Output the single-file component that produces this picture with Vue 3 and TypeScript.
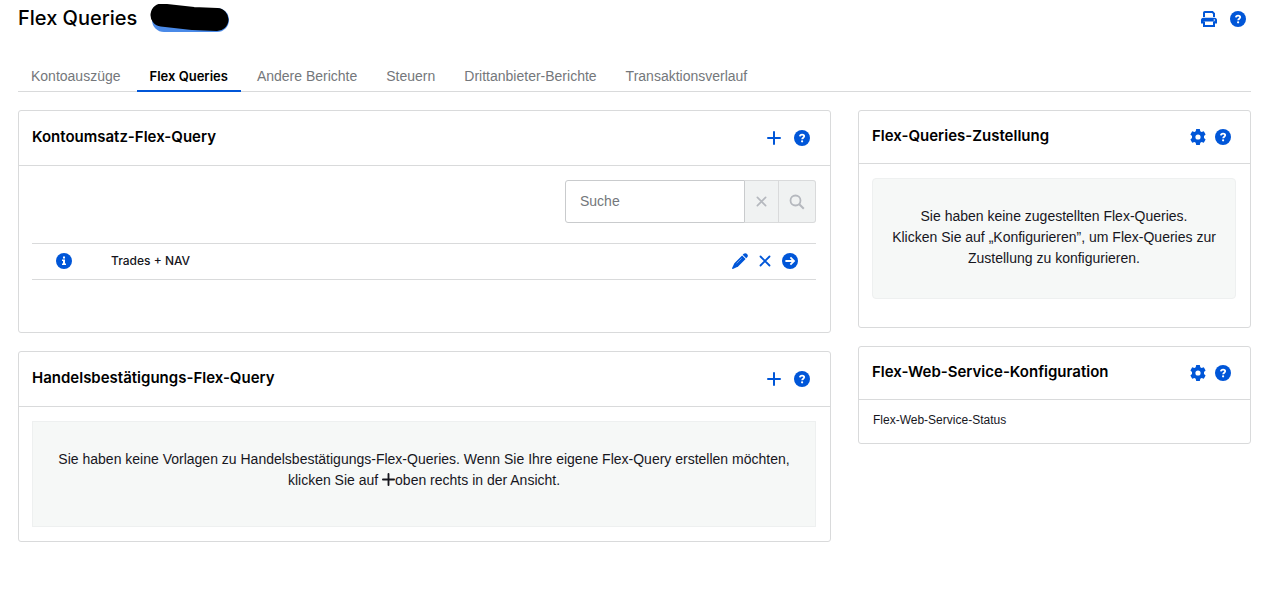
<script setup lang="ts">
import { ref } from 'vue'

interface Tab {
  label: string
  href: string
}

const tabs: Tab[] = [
  { label: 'Kontoauszüge', href: '#kontoauszuege' },
  { label: 'Flex Queries', href: '#flex-queries' },
  { label: 'Andere Berichte', href: '#andere-berichte' },
  { label: 'Steuern', href: '#steuern' },
  { label: 'Drittanbieter-Berichte', href: '#drittanbieter' },
  { label: 'Transaktionsverlauf', href: '#transaktionen' },
]
const activeTab = ref('Flex Queries')
const search = ref('')
const queries = ref<string[]>(['Trades + NAV'])
</script>

<template>
  <svg class="symbols" aria-hidden="true">
    <symbol id="i-help" viewBox="0 0 16 16">
      <circle cx="8" cy="8" r="8" fill="currentColor" />
      <path d="M5.900 6.400C6 5.200 6.900 4.600 8.100 4.600c1.200 0 2.100.6 2.100 1.700 0 1.400-2 1.400-2 2.900" fill="none" stroke="#fff" stroke-width="1.800" />
      <circle cx="8.100" cy="11.300" r="1.100" fill="#fff" />
    </symbol>
    <symbol id="i-info" viewBox="0 0 16 16">
      <circle cx="8" cy="8" r="8" fill="currentColor" />
      <path d="M7 3.400h2v2H7zM6 6.600h3v3.900h1V12H6v-1.500h1V8.100H6z" fill="#fff" />
    </symbol>
    <symbol id="i-arrow" viewBox="0 0 16 16">
      <circle cx="8" cy="8" r="8" fill="currentColor" />
      <path d="M3.400 8h8.400M8.400 4.400 12 8l-3.600 3.600" fill="none" stroke="#fff" stroke-width="1.800" />
    </symbol>
    <symbol id="i-plus" viewBox="0 0 14 14">
      <path d="M7 1v12M1 7h12" fill="none" stroke="currentColor" stroke-width="2" stroke-linecap="round" />
    </symbol>
    <symbol id="i-cross" viewBox="0 0 12 12">
      <path d="m1.500 1.500 9 9M10.500 1.500l-9 9" fill="none" stroke="currentColor" stroke-width="1.800" stroke-linecap="round" />
    </symbol>
    <symbol id="i-search" viewBox="0 0 16 16">
      <circle cx="6.500" cy="6.500" r="5" fill="none" stroke="currentColor" stroke-width="1.800" />
      <path d="m10.300 10.300 4.500 4.500" fill="none" stroke="currentColor" stroke-width="2" />
    </symbol>
    <symbol id="i-pencil" viewBox="0 0 16 16">
      <path fill="currentColor" d="m10.700 1.800 1-1c.9-.9 2.300-.9 3.100 0l.4.400c.9.900.9 2.300 0 3.100l-1 1zM10.100 2.400l3.500 3.500-7.500 7.500c-.3.300-.6.500-1 .6L.9 15.900c-.5.200-1-.3-.8-.8L2 10.900c.1-.4.300-.7.600-1z" />
      <path d="m4.600 10.400 5-5" stroke="#fff" stroke-width=".4" fill="none" />
    </symbol>
    <symbol id="i-print" viewBox="0 0 16 16">
      <path d="M3 6V1.800C3 1.300 3.300 1 3.800 1h7.600L13 2.600V6" fill="none" stroke="currentColor" stroke-width="2" />
      <path d="M2.200 6.800h11.600c1.200 0 2.200 1 2.200 2.200v3.500h-2.500v-2h-11v2H0V9c0-1.200 1-2.200 2.200-2.200z" fill="currentColor" />
      <path d="M3 10.500V15h10v-4.500" fill="none" stroke="currentColor" stroke-width="2" />
      <circle cx="13.300" cy="9" r=".8" fill="#fff" />
    </symbol>
    <symbol id="i-gear" viewBox="0 0 16 16">
      <path fill="currentColor" fill-rule="evenodd" d="M6.200 0h3.600l.5 2.200 1.300.8 2.200-.7 1.800 3.100L14 7v2l1.600 1.600-1.800 3.100-2.200-.7-1.300.8-.5 2.200H6.200l-.5-2.200-1.300-.8-2.200.7-1.800-3.100L2 9V7L.4 5.400l1.800-3.100 2.200.7 1.300-.8zM8 5.400a2.600 2.600 0 1 0 0 5.200 2.600 2.600 0 0 0 0-5.200z" />
    </symbol>
  </svg>

  <div class="page">
    <header class="top">
      <h1>Flex Queries</h1>
      <svg class="account" viewBox="0 0 80 30" aria-hidden="true">
        <rect x="2" y="4" width="77" height="24" rx="12" fill="#4a8ae8" />
        <path d="M12 11 43 14.500 67 15.500" fill="none" stroke="#000" stroke-width="23" stroke-linecap="round" stroke-linejoin="round" />
      </svg>
      <div class="top-actions">
        <button type="button" aria-label="Drucken"><svg class="ico"><use href="#i-print" /></svg></button>
        <button type="button" aria-label="Hilfe"><svg class="ico"><use href="#i-help" /></svg></button>
      </div>
    </header>

    <nav class="tabs">
      <a v-for="tab in tabs" :key="tab.label" :href="tab.href" :class="{ active: tab.label === activeTab }" @click.prevent="activeTab = tab.label">{{ tab.label }}</a>
    </nav>

    <main class="columns">
      <div class="column">
        <section class="card">
          <header class="card-head wide">
            <h2>Kontoumsatz-Flex-Query</h2>
            <div class="actions wide">
              <button type="button" aria-label="Hinzufügen"><svg class="ico-plus"><use href="#i-plus" /></svg></button>
              <button type="button" aria-label="Hilfe"><svg class="ico"><use href="#i-help" /></svg></button>
            </div>
          </header>
          <div class="card-body queries">
            <form class="search" @submit.prevent>
              <input v-model="search" type="text" placeholder="Suche" aria-label="Suche">
              <button type="button" class="clear" aria-label="Löschen" @click="search = ''"><svg class="ico-small"><use href="#i-cross" /></svg></button>
              <button type="submit" class="find" aria-label="Suchen"><svg class="ico"><use href="#i-search" /></svg></button>
            </form>
            <table>
              <tbody>
                <tr v-for="query in queries" :key="query">
                  <td class="info"><button type="button" aria-label="Info"><svg class="ico"><use href="#i-info" /></svg></button></td>
                  <td>{{ query }}</td>
                  <td class="row-actions">
                    <div>
                      <button type="button" aria-label="Bearbeiten"><svg class="ico"><use href="#i-pencil" /></svg></button>
                      <button type="button" aria-label="Entfernen"><svg class="ico-cross"><use href="#i-cross" /></svg></button>
                      <button type="button" aria-label="Ausführen"><svg class="ico"><use href="#i-arrow" /></svg></button>
                    </div>
                  </td>
                </tr>
              </tbody>
            </table>
          </div>
        </section>

        <section class="card">
          <header class="card-head wide">
            <h2>Handelsbestätigungs-Flex-Query</h2>
            <div class="actions wide">
              <button type="button" aria-label="Hinzufügen"><svg class="ico-plus"><use href="#i-plus" /></svg></button>
              <button type="button" aria-label="Hilfe"><svg class="ico"><use href="#i-help" /></svg></button>
            </div>
          </header>
          <div class="card-body">
            <p class="note square"><span>Sie haben keine Vorlagen zu Handelsbestätigungs-Flex-Queries. Wenn Sie Ihre eigene Flex-Query erstellen möchten,</span> <span>klicken Sie auf</span> <svg class="inline-plus" aria-hidden="true"><use href="#i-plus" /></svg><span>oben rechts in der Ansicht.</span></p>
          </div>
        </section>
      </div>

      <div class="column">
        <section class="card">
          <header class="card-head">
            <h2>Flex-Queries-Zustellung</h2>
            <div class="actions">
              <button type="button" aria-label="Konfigurieren"><svg class="ico"><use href="#i-gear" /></svg></button>
              <button type="button" aria-label="Hilfe"><svg class="ico"><use href="#i-help" /></svg></button>
            </div>
          </header>
          <div class="card-body delivery">
            <p class="note">Sie haben keine zugestellten Flex-Queries.<br>Klicken Sie auf „Konfigurieren”, um Flex-Queries zur Zustellung zu konfigurieren.</p>
          </div>
        </section>

        <section class="card">
          <header class="card-head">
            <h2>Flex-Web-Service-Konfiguration</h2>
            <div class="actions">
              <button type="button" aria-label="Konfigurieren"><svg class="ico"><use href="#i-gear" /></svg></button>
              <button type="button" aria-label="Hilfe"><svg class="ico"><use href="#i-help" /></svg></button>
            </div>
          </header>
          <p class="status">Flex-Web-Service-Status</p>
        </section>
      </div>
    </main>
  </div>
</template>

<style>
body {
  margin: 0;
  background: #fff;
}
</style>

<style scoped>
.symbols {
  position: absolute;
  width: 0;
  height: 0;
}
.page {
  padding: 0 21px 24px 18px;
  font-family: "Liberation Sans", Arial, sans-serif;
  font-size: 14px;
  line-height: 21px;
  color: #16161d;
}
h1,
h2,
p {
  margin: 0;
}
h1,
h2 {
  font-family: Inter, sans-serif;
  font-weight: 600;
  color: #000;
}
h1 {
  margin-bottom: 2px;
  font-size: 20px;
  line-height: 36px;
  font-weight: 500;
}
h2 {
  font-size: 15px;
  line-height: 24px;
}
svg {
  display: block;
}
button {
  display: flex;
  align-items: center;
  justify-content: center;
  padding: 0;
  border: 0;
  background: none;
  color: #0056d8;
  cursor: pointer;
}
.ico {
  width: 16px;
  height: 16px;
}
.ico-plus {
  width: 14px;
  height: 14px;
}
.ico-cross {
  width: 12px;
  height: 12px;
}
.ico-small {
  width: 11px;
  height: 11px;
}
.top {
  display: flex;
  align-items: center;
  height: 38px;
  gap: 13px;
}
.account {
  width: 80px;
  height: 30px;
}
.top-actions {
  display: flex;
  gap: 13px;
  margin-left: auto;
  padding-right: 5px;
}
.tabs {
  display: flex;
  gap: 3px;
  margin-top: 23px;
  border-bottom: 1px solid #d9dadb;
}
.tabs a {
  margin-bottom: -1px;
  padding: 5px 13px 3px;
  border-bottom: 2px solid transparent;
  color: #74777b;
  text-decoration: none;
  white-space: nowrap;
}
.tabs a.active {
  border-bottom-color: #0056d8;
  color: #000;
  font-family: Inter, sans-serif;
  font-size: 13px;
  font-weight: 600;
}
.columns {
  display: grid;
  grid-template-columns: 813fr 393fr;
  gap: 27px;
  align-items: start;
  margin-top: 18px;
}
.column {
  display: grid;
  gap: 18px;
}
.card {
  border: 1px solid #d9dadb;
  border-radius: 3px;
}
.card-head {
  display: flex;
  align-items: center;
  justify-content: space-between;
  padding: 13px 19px 15px 13px;
  border-bottom: 1px solid #d9dadb;
}
.card-head.wide {
  padding: 14px 20px 16px 13px;
}
.actions {
  display: flex;
  align-items: center;
  gap: 9px;
  padding-top: 2px;
}
.actions.wide {
  gap: 13px;
}
.card-body {
  padding: 14px;
  padding-left: 13px;
}
.queries {
  padding-bottom: 52px;
}
.delivery {
  padding-bottom: 28px;
}
.search {
  display: flex;
  width: 251px;
  height: 43px;
  margin-left: auto;
  margin-bottom: 20px;
}
.search input {
  box-sizing: border-box;
  flex: 1;
  min-width: 0;
  padding: 0 14px;
  border: 1px solid #c9cbcd;
  border-radius: 3px 0 0 3px;
  font: inherit;
  color: #16161d;
}
.search input::placeholder {
  color: #74777b;
  opacity: 1;
}
.search button {
  box-sizing: border-box;
  border: 1px solid #d9dadb;
  border-left: 0;
  background: #f0f2f2;
  color: #b5b8be;
}
.clear {
  width: 34px;
}
.find {
  width: 37px;
  border-radius: 0 3px 3px 0;
}
table {
  width: 100%;
  border-collapse: collapse;
  font-family: Inter, sans-serif;
  font-size: 12px;
  line-height: 18px;
  font-weight: 500;
}
tr {
  border-top: 1px solid #d9dadb;
  border-bottom: 1px solid #d9dadb;
}
td {
  height: 33px;
  padding: 0 0 2px;
}
td.info {
  width: 55px;
  padding-left: 24px;
}
.row-actions div {
  display: flex;
  align-items: center;
  justify-content: flex-end;
  gap: 11px;
  padding-right: 18px;
}
.note {
  padding: 27px 16px 29px;
  border: 1px solid #eef0f0;
  border-radius: 4px;
  background: #f6f8f7;
  text-align: center;
}
.note.square {
  border-radius: 0;
  padding-bottom: 35px;
}
.inline-plus {
  display: inline-block;
  width: 13px;
  height: 13px;
  vertical-align: -1px;
}
.status {
  padding: 11px 14px 14px;
  font-size: 12px;
  line-height: 18px;
}
</style>
